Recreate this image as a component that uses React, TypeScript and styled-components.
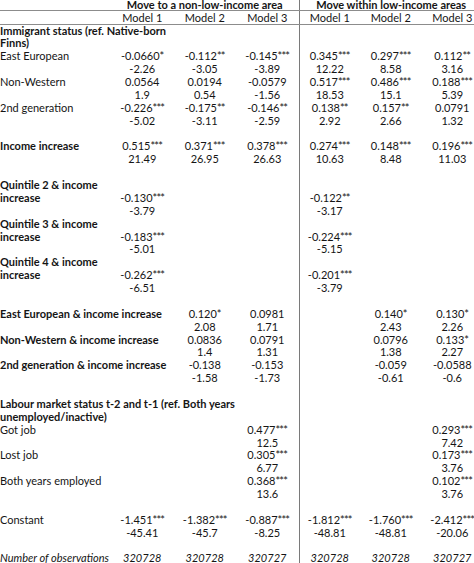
import React from "react";
import styled, { createGlobalStyle } from "styled-components";

const Global = createGlobalStyle`
  html, body { margin: 0; padding: 0; background: #fff; overflow: hidden; }
  body { font-family: "Lato", "Open Sans", "Liberation Sans", sans-serif; color: #151515; }
`;

const Table = styled.div`
  width: 484px;
  display: flex;
  flex-direction: column;
  font-size: 11px;
`;

const Row = styled.div<{ $h: number; $rule?: boolean }>`
  display: grid;
  grid-template-columns: 111px repeat(3, 62.5px) repeat(3, 61.5px);
  height: ${(p) => p.$h}px;
  line-height: ${(p) => p.$h}px;
  border-bottom: ${(p) => (p.$rule ? "1px solid #8c8c8c" : "none")};
  box-sizing: content-box;
`;

const Label = styled.div<{ $kind: "bold" | "plain" | "italic" }>`
  white-space: nowrap;
  overflow: visible;
  padding-left: 0;
  font-weight: ${(p) => (p.$kind === "bold" ? 700 : 400)};
  font-style: ${(p) => (p.$kind === "italic" ? "italic" : "normal")};
  position: relative;
  z-index: 1;
`;

const Cell = styled.div<{ $divider?: boolean; $italic?: boolean }>`
  text-align: center;
  white-space: nowrap;
  box-sizing: border-box;
  border-left: ${(p) => (p.$divider ? "1px solid #7a7a7a" : "none")};
  font-style: ${(p) => (p.$italic ? "italic" : "normal")};
`;

const Stars = styled.span`
  letter-spacing: -0.8px;
`;

const GroupHead = styled.div<{ $divider?: boolean }>`
  grid-column: span 3;
  text-align: center;
  font-weight: 700;
  white-space: nowrap;
  box-sizing: border-box;
  border-left: ${(p) => (p.$divider ? "1px solid #7a7a7a" : "none")};
`;

type Kind = "bold" | "plain" | "italic";
type R = { label?: string; kind?: Kind; v?: string[] };

const E = ["", "", "", "", "", ""];

const rows: R[] = [
  { label: "Immigrant status (ref. Native-born", kind: "bold" },
  { label: "Finns)", kind: "bold" },
  { label: "East European", kind: "plain", v: ["-0.0660*", "-0.112**", "-0.145***", "0.345***", "0.297***", "0.112**"] },
  { v: ["-2.26", "-3.05", "-3.89", "12.22", "8.58", "3.16"] },
  { label: "Non-Western", kind: "plain", v: ["0.0564", "0.0194", "-0.0579", "0.517***", "0.486***", "0.188***"] },
  { v: ["1.9", "0.54", "-1.56", "18.53", "15.1", "5.39"] },
  { label: "2nd generation", kind: "plain", v: ["-0.226***", "-0.175**", "-0.146**", "0.138**", "0.157**", "0.0791"] },
  { v: ["-5.02", "-3.11", "-2.59", "2.92", "2.66", "1.32"] },
  {},
  { label: "Income increase", kind: "bold", v: ["0.515***", "0.371***", "0.378***", "0.274***", "0.148***", "0.196***"] },
  { v: ["21.49", "26.95", "26.63", "10.63", "8.48", "11.03"] },
  {},
  { label: "Quintile 2 & income", kind: "bold" },
  { label: "increase", kind: "bold", v: ["-0.130***", "", "", "-0.122**", "", ""] },
  { v: ["-3.79", "", "", "-3.17", "", ""] },
  { label: "Quintile 3 & income", kind: "bold" },
  { label: "increase", kind: "bold", v: ["-0.183***", "", "", "-0.224***", "", ""] },
  { v: ["-5.01", "", "", "-5.15", "", ""] },
  { label: "Quintile 4 & income", kind: "bold" },
  { label: "increase", kind: "bold", v: ["-0.262***", "", "", "-0.201***", "", ""] },
  { v: ["-6.51", "", "", "-3.79", "", ""] },
  {},
  { label: "East European & income increase", kind: "bold", v: ["", "0.120*", "0.0981", "", "0.140*", "0.130*"] },
  { v: ["", "2.08", "1.71", "", "2.43", "2.26"] },
  { label: "Non-Western & income increase", kind: "bold", v: ["", "0.0836", "0.0791", "", "0.0796", "0.133*"] },
  { v: ["", "1.4", "1.31", "", "1.38", "2.27"] },
  { label: "2nd generation & income increase", kind: "bold", v: ["", "-0.138", "-0.153", "", "-0.059", "-0.0588"] },
  { v: ["", "-1.58", "-1.73", "", "-0.61", "-0.6"] },
  {},
  { label: "Labour market status t-2 and t-1 (ref. Both years", kind: "bold" },
  { label: "unemployed/inactive)", kind: "bold" },
  { label: "Got job", kind: "plain", v: ["", "", "0.477***", "", "", "0.293***"] },
  { v: ["", "", "12.5", "", "", "7.42"] },
  { label: "Lost job", kind: "plain", v: ["", "", "0.305***", "", "", "0.173***"] },
  { v: ["", "", "6.77", "", "", "3.76"] },
  { label: "Both years employed", kind: "plain", v: ["", "", "0.368***", "", "", "0.102***"] },
  { v: ["", "", "13.6", "", "", "3.76"] },
  {},
  { label: "Constant", kind: "plain", v: ["-1.451***", "-1.382***", "-0.887***", "-1.812***", "-1.760***", "-2.412***"] },
  { v: ["-45.41", "-45.7", "-8.25", "-48.81", "-48.81", "-20.06"] },
  {},
  { label: "Number of observations", kind: "italic", v: ["320728", "320728", "320727", "320728", "320728", "320727"] },
];

const ROW_H = 12.88;

function Value({ text }: { text: string }) {
  const m = text.match(/^(.*?)(\*+)$/);
  if (!m) return <>{text}</>;
  return (
    <>
      {m[1]}
      <Stars>{m[2]}</Stars>
    </>
  );
}

export default function App() {
  return (
    <>
      <Global />
      <Table>
        <Row $h={9.5} $rule>
          <Label $kind="plain" />
          <GroupHead>Move to a non-low-income area</GroupHead>
          <GroupHead $divider>Move within low-income areas</GroupHead>
        </Row>
        <Row $h={13} $rule>
          <Label $kind="plain" />
          {["Model 1", "Model 2", "Model 3", "Model 1", "Model 2", "Model 3"].map((m, i) => (
            <Cell key={i} $divider={i === 3}>{m}</Cell>
          ))}
        </Row>
        {rows.map((r, idx) => {
          const vals = r.v ?? E;
          return (
            <Row key={idx} $h={ROW_H}>
              <Label $kind={r.kind ?? "plain"}>{r.label ?? ""}</Label>
              {vals.map((v, i) => (
                <Cell key={i} $divider={i === 3} $italic={r.kind === "italic"}>
                  <Value text={v} />
                </Cell>
              ))}
            </Row>
          );
        })}
      </Table>
    </>
  );
}
